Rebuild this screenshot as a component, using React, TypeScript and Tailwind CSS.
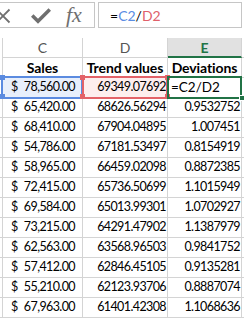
import React from "react";

const data: [string, string, string][] = [
  ["78,560.00", "69349.07692", "=C2/D2"],
  ["65,420.00", "68626.56294", "0.9532752"],
  ["68,410.00", "67904.04895", "1.007451"],
  ["54,786.00", "67181.53497", "0.8154919"],
  ["58,965.00", "66459.02098", "0.8872385"],
  ["72,415.00", "65736.50699", "1.1015949"],
  ["69,584.00", "65013.99301", "1.0702927"],
  ["73,215.00", "64291.47902", "1.1387979"],
  ["62,563.00", "63568.96503", "0.9841752"],
  ["57,412.00", "62846.45105", "0.9135281"],
  ["55,210.00", "62123.93706", "0.8887074"],
  ["67,963.00", "61401.42308", "1.1068636"],
];

export default function App() {
  return (
    <div className="w-[244px] h-[320px] overflow-hidden bg-white text-black font-['Lato',sans-serif]">
      {/* formula bar */}
      <div className="h-[38px] flex items-start pt-[2px]">
        <div className="w-[95px] h-[26px] border-t border-b border-r border-[#c6c6c6] relative">
          <svg className="absolute left-[-5px] top-[5px]" width="16" height="16" viewBox="0 0 16 16">
            <path d="M1.5 1.5 L14.5 14.5 M14.5 1.5 L1.5 14.5" stroke="#707070" strokeWidth="1.8" fill="none" />
          </svg>
          <svg className="absolute left-[31px] top-[5px]" width="20" height="16" viewBox="0 0 20 16">
            <path d="M1.2 7.5 L7 13.3 L18.8 1.5" stroke="#6f6f6f" strokeWidth="3.6" fill="none" />
          </svg>
          <span className="absolute left-[66px] top-[1px] text-[22px] italic text-[#707070] leading-none font-['Liberation_Serif',serif]">
            fx
          </span>
        </div>
        <div className="ml-[3px] w-[144px] h-[26px] border border-[#c6c6c6] flex items-center pl-[11px] text-[14px]">
          <span>=</span>
          <span className="text-[#5a8de3]">C2</span>
          <span>/</span>
          <span className="text-[#e0606a]">D2</span>
        </div>
      </div>

      {/* grid */}
      <div className="relative text-[12.5px] tracking-[-0.6px]">
        {/* header letters */}
        <div className="flex h-[20px] text-[14px] tracking-normal text-[#555]">
          <div className="w-[3px] border-r border-[#d4d4d4]" />
          <div className="w-[80px] border-r border-b border-[#d4d4d4] flex items-center justify-center">C</div>
          <div className="w-[85px] border-r border-b border-[#d4d4d4] flex items-center justify-center">D</div>
          <div className="w-[74px] border-r border-[#d4d4d4] bg-[#e1e1e1] border-b-2 border-b-[#217346] flex items-center justify-center font-bold text-[#217346]">E</div>
          <div className="flex-1 border-b border-[#d4d4d4]" />
        </div>
        {/* row 1 */}
        <div className="flex h-[20px] font-bold text-[14px] tracking-[-0.1px]">
          <div className="w-[3px] border-r border-b border-[#d4d4d4]" />
          <div className="w-[80px] border-r border-b border-[#d4d4d4] flex items-center justify-center">Sales</div>
          <div className="w-[85px] border-r border-b border-[#d4d4d4] flex items-center justify-center whitespace-nowrap">Trend values</div>
          <div className="w-[74px] border-r border-b border-[#d4d4d4] flex items-center justify-center">Deviations</div>
          <div className="flex-1 border-b border-[#d4d4d4]" />
        </div>
        {data.map((r, i) => (
          <div key={i} className="flex h-[20px]">
            <div className="w-[3px] border-r border-b border-[#d4d4d4]" />
            <div className={`w-[80px] border-r border-b border-[#d4d4d4] flex items-center justify-between pl-[8px] pr-[7px] ${i === 0 ? "bg-[#e8effb]" : ""}`}>
              <span>$</span>
              <span>{r[0]}</span>
            </div>
            <div className={`w-[85px] border-r border-b border-[#d4d4d4] flex items-center justify-end pr-[1px] ${i === 0 ? "bg-[#fdeeee]" : ""}`}>
              {r[1]}
            </div>
            <div className={`w-[74px] border-r border-b border-[#d4d4d4] flex items-center ${i === 0 ? "justify-start pl-[3px] text-[13.5px] tracking-normal" : "justify-end pr-[1px]"}`}>
              {r[2]}
            </div>
            <div className="flex-1 border-b border-[#d4d4d4]" />
          </div>
        ))}

        {/* selection overlays */}
        <div className="absolute left-[1px] top-[38px] w-[82px] h-[23px] border-2 border-[#5b8be0]" />
        <div className="absolute left-[0px] top-[37px] w-[5px] h-[5px] bg-[#5b8be0]" />
        <div className="absolute left-[0px] top-[56px] w-[5px] h-[5px] bg-[#5b8be0]" />

        <div className="absolute left-[82px] top-[38px] w-[86px] h-[23px] border-2 border-[#e36268]" />
        <div className="absolute left-[80px] top-[37px] w-[5px] h-[5px] bg-[#e36268]" />
        <div className="absolute left-[80px] top-[56px] w-[5px] h-[5px] bg-[#e36268]" />
        <div className="absolute left-[165px] top-[37px] w-[5px] h-[5px] bg-[#e36268]" />
        <div className="absolute left-[165px] top-[56px] w-[5px] h-[5px] bg-[#e36268]" />

        <div className="absolute left-[167px] top-[38px] w-[75px] h-[23px] border-2 border-[#217346]" />
        <div className="absolute left-[239px] top-[57px] w-[6px] h-[6px] bg-[#217346] border border-white" />
      </div>
    </div>
  );
}
